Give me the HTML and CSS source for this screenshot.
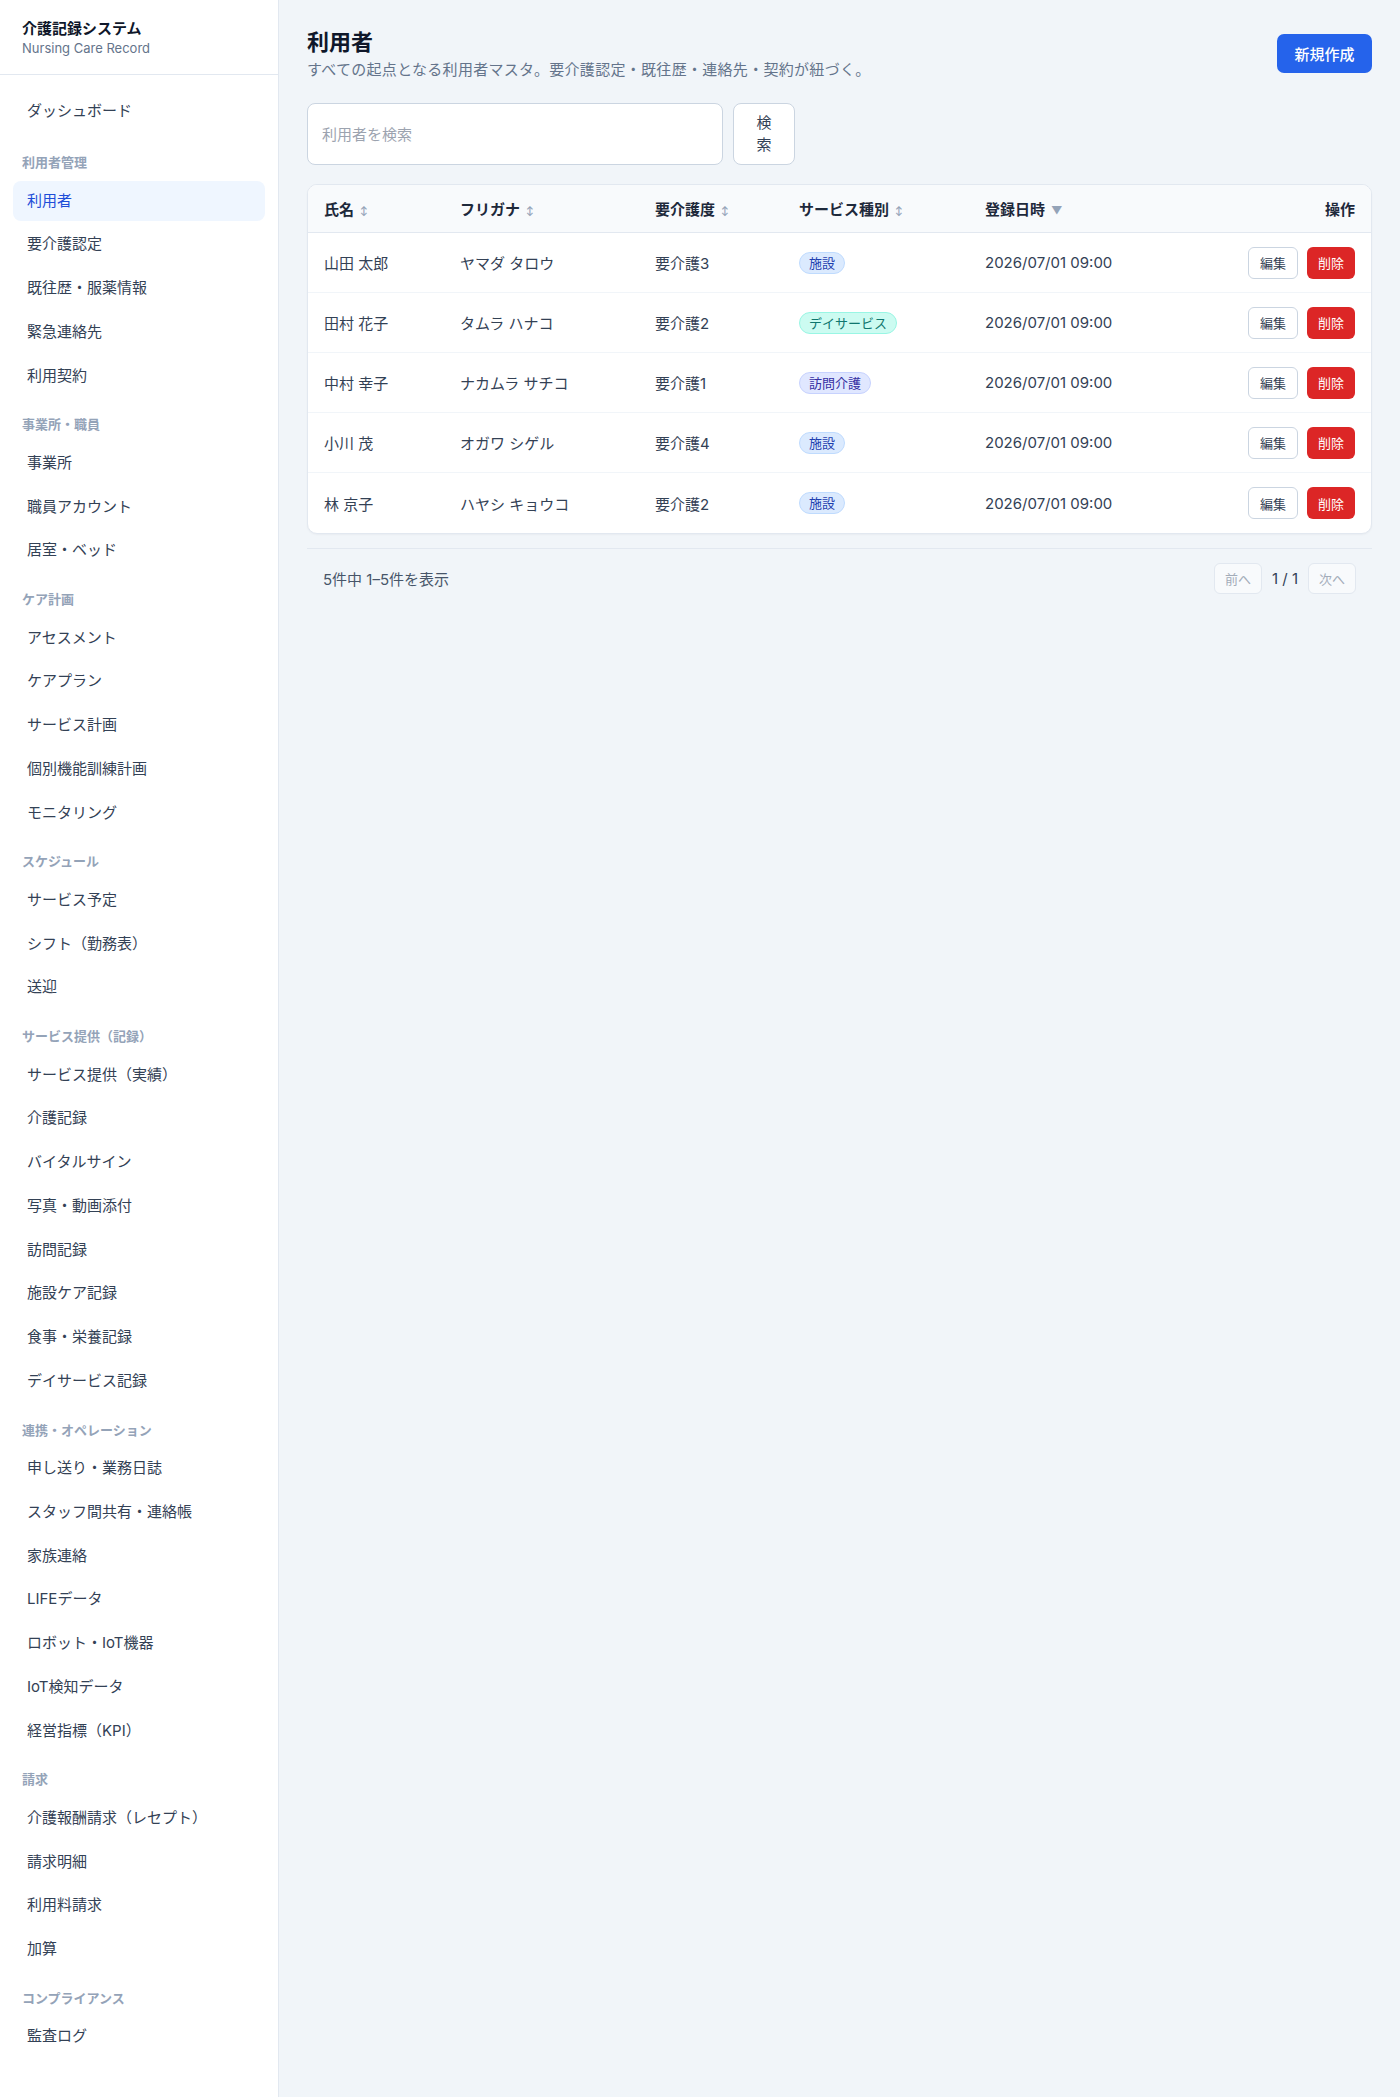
FILE: index.html
```html
<!DOCTYPE html>
<html lang="ja">
<head>
    <meta charset="UTF-8">
    <meta name="viewport" content="width=device-width, initial-scale=1.0">
    <title>利用者 - 介護記録システム</title>
    <link rel="stylesheet" href="styles.css">
</head>
<body>
    <div class="layout">
        <aside class="sidebar">
            <div class="brand">
                <div class="brand-title">介護記録システム</div>
                <div class="brand-sub">Nursing Care Record</div>
            </div>
            <nav class="nav">
                <a href="#" class="nav-item first">ダッシュボード</a>

                <div class="nav-label">利用者管理</div>
                <a href="#" class="nav-item active">利用者</a>
                <a href="#" class="nav-item">要介護認定</a>
                <a href="#" class="nav-item">既往歴・服薬情報</a>
                <a href="#" class="nav-item">緊急連絡先</a>
                <a href="#" class="nav-item">利用契約</a>

                <div class="nav-label">事業所・職員</div>
                <a href="#" class="nav-item">事業所</a>
                <a href="#" class="nav-item">職員アカウント</a>
                <a href="#" class="nav-item">居室・ベッド</a>

                <div class="nav-label">ケア計画</div>
                <a href="#" class="nav-item">アセスメント</a>
                <a href="#" class="nav-item">ケアプラン</a>
                <a href="#" class="nav-item">サービス計画</a>
                <a href="#" class="nav-item">個別機能訓練計画</a>
                <a href="#" class="nav-item">モニタリング</a>

                <div class="nav-label">スケジュール</div>
                <a href="#" class="nav-item">サービス予定</a>
                <a href="#" class="nav-item">シフト（勤務表）</a>
                <a href="#" class="nav-item">送迎</a>

                <div class="nav-label">サービス提供（記録）</div>
                <a href="#" class="nav-item">サービス提供（実績）</a>
                <a href="#" class="nav-item">介護記録</a>
                <a href="#" class="nav-item">バイタルサイン</a>
                <a href="#" class="nav-item">写真・動画添付</a>
                <a href="#" class="nav-item">訪問記録</a>
                <a href="#" class="nav-item">施設ケア記録</a>
                <a href="#" class="nav-item">食事・栄養記録</a>
                <a href="#" class="nav-item">デイサービス記録</a>

                <div class="nav-label">連携・オペレーション</div>
                <a href="#" class="nav-item">申し送り・業務日誌</a>
                <a href="#" class="nav-item">スタッフ間共有・連絡帳</a>
                <a href="#" class="nav-item">家族連絡</a>
                <a href="#" class="nav-item">LIFEデータ</a>
                <a href="#" class="nav-item">ロボット・IoT機器</a>
                <a href="#" class="nav-item">IoT検知データ</a>
                <a href="#" class="nav-item">経営指標（KPI）</a>

                <div class="nav-label">請求</div>
                <a href="#" class="nav-item">介護報酬請求（レセプト）</a>
                <a href="#" class="nav-item">請求明細</a>
                <a href="#" class="nav-item">利用料請求</a>
                <a href="#" class="nav-item">加算</a>

                <div class="nav-label">コンプライアンス</div>
                <a href="#" class="nav-item">監査ログ</a>
            </nav>
        </aside>

        <main class="main">
            <div class="page-head">
                <div>
                    <h1>利用者</h1>
                    <p>すべての起点となる利用者マスタ。要介護認定・既往歴・連絡先・契約が紐づく。</p>
                </div>
                <button class="btn-primary">新規作成</button>
            </div>

            <form class="search">
                <input type="text" placeholder="利用者を検索">
                <button type="submit">検索</button>
            </form>

            <div class="card">
                <table>
                    <colgroup>
                        <col style="width: 136px">
                        <col style="width: 195px">
                        <col style="width: 144px">
                        <col style="width: 186px">
                        <col style="width: 250px">
                        <col>
                    </colgroup>
                    <thead>
                        <tr>
                            <th>氏名<span class="sort">↕</span></th>
                            <th>フリガナ<span class="sort">↕</span></th>
                            <th>要介護度<span class="sort">↕</span></th>
                            <th>サービス種別<span class="sort">↕</span></th>
                            <th>登録日時<span class="sort-active">▼</span></th>
                            <th class="right">操作</th>
                        </tr>
                    </thead>
                    <tbody>
                        <tr>
                            <td>山田 太郎</td>
                            <td>ヤマダ タロウ</td>
                            <td>要介護3</td>
                            <td><span class="badge badge-facility">施設</span></td>
                            <td>2026/07/01 09:00</td>
                            <td><div class="actions"><button class="btn-sm btn-edit">編集</button><button class="btn-sm btn-del">削除</button></div></td>
                        </tr>
                        <tr>
                            <td>田村 花子</td>
                            <td>タムラ ハナコ</td>
                            <td>要介護2</td>
                            <td><span class="badge badge-day">デイサービス</span></td>
                            <td>2026/07/01 09:00</td>
                            <td><div class="actions"><button class="btn-sm btn-edit">編集</button><button class="btn-sm btn-del">削除</button></div></td>
                        </tr>
                        <tr>
                            <td>中村 幸子</td>
                            <td>ナカムラ サチコ</td>
                            <td>要介護1</td>
                            <td><span class="badge badge-visit">訪問介護</span></td>
                            <td>2026/07/01 09:00</td>
                            <td><div class="actions"><button class="btn-sm btn-edit">編集</button><button class="btn-sm btn-del">削除</button></div></td>
                        </tr>
                        <tr>
                            <td>小川 茂</td>
                            <td>オガワ シゲル</td>
                            <td>要介護4</td>
                            <td><span class="badge badge-facility">施設</span></td>
                            <td>2026/07/01 09:00</td>
                            <td><div class="actions"><button class="btn-sm btn-edit">編集</button><button class="btn-sm btn-del">削除</button></div></td>
                        </tr>
                        <tr>
                            <td>林 京子</td>
                            <td>ハヤシ キョウコ</td>
                            <td>要介護2</td>
                            <td><span class="badge badge-facility">施設</span></td>
                            <td>2026/07/01 09:00</td>
                            <td><div class="actions"><button class="btn-sm btn-edit">編集</button><button class="btn-sm btn-del">削除</button></div></td>
                        </tr>
                    </tbody>
                </table>
            </div>

            <div class="pager">
                <span class="pager-info">5件中 1–5件を表示</span>
                <div class="pager-nav">
                    <button class="pager-btn" disabled>前へ</button>
                    <span class="pager-page">1 / 1</span>
                    <button class="pager-btn" disabled>次へ</button>
                </div>
            </div>
        </main>
    </div>
</body>
</html>
```

FILE: styles.css
```css
body {
    margin: 0;
    font-family: Inter, "Noto Sans CJK JP", sans-serif;
    font-size: 15px;
    color: #334155;
    background-color: #f1f5f9;
}

.layout {
    display: flex;
    min-height: 100vh;
}

/* Sidebar */
.sidebar {
    width: 279px;
    flex-shrink: 0;
    box-sizing: border-box;
    background-color: #fff;
    border-right: 1px solid #e2e8f0;
}

.brand {
    padding: 19px 22px 17px;
    border-bottom: 1px solid #e2e8f0;
}

.brand-title {
    font-size: 15px;
    font-weight: 700;
    line-height: 20px;
    color: #0f172a;
}

.brand-sub {
    font-size: 13px;
    line-height: 18px;
    color: #64748b;
}

.nav {
    display: flex;
    flex-direction: column;
    padding: 16px 13px;
}

.nav-item {
    display: block;
    height: 40px;
    line-height: 40px;
    padding: 0 14px;
    margin-bottom: 3.75px;
    border-radius: 8px;
    color: #334155;
    text-decoration: none;
    font-size: 15px;
}

.nav-item.first {
    margin-bottom: 6px;
}

.nav-item.active {
    background-color: #eff6ff;
    color: #1d4ed8;
}

.nav-label {
    margin: 17px 0 10.5px;
    padding: 0 9px;
    font-size: 13px;
    line-height: 16px;
    font-weight: 700;
    color: #94a3b8;
}

/* Main */
.main {
    flex: 1;
    min-width: 0;
    padding: 28px;
}

.page-head {
    display: flex;
    justify-content: space-between;
    align-items: flex-start;
}

.page-head h1 {
    margin: 0;
    font-size: 22px;
    line-height: 28px;
    font-weight: 700;
    color: #0f172a;
}

.page-head p {
    margin: 3px 0 0;
    font-size: 15px;
    line-height: 22px;
    letter-spacing: 0.3px;
    color: #64748b;
}

.btn-primary {
    height: 39px;
    margin-top: 6px;
    padding: 0 17.5px;
    border: none;
    border-radius: 7px;
    background-color: #2563eb;
    color: #fff;
    font-family: inherit;
    font-size: 15px;
    font-weight: 500;
    cursor: pointer;
}

.search {
    display: flex;
    gap: 10px;
    margin-top: 22px;
}

.search input {
    width: 416px;
    box-sizing: border-box;
    padding: 0 14px;
    border: 1px solid #cbd5e1;
    border-radius: 8px;
    background-color: #fff;
    font-family: inherit;
    font-size: 15px;
    color: #334155;
}

.search input::placeholder {
    color: #9ca3af;
}

.search button {
    width: 62px;
    padding: 8px 16px;
    line-height: 22px;
    border: 1px solid #cbd5e1;
    border-radius: 8px;
    background-color: #fff;
    font-family: inherit;
    font-size: 15px;
    color: #334155;
    cursor: pointer;
}

/* Table */
.card {
    margin-top: 19px;
    background-color: #fff;
    border: 1px solid #e2e8f0;
    border-radius: 10px;
    overflow: hidden;
    box-shadow: 0 1px 2px rgba(15, 23, 42, 0.04);
}

table {
    width: 100%;
    border-collapse: separate;
    border-spacing: 0;
    table-layout: fixed;
}

th {
    height: 48px;
    box-sizing: border-box;
    padding: 0 16px;
    text-align: left;
    background-color: #f8fafc;
    border-bottom: 1px solid #e2e8f0;
    font-weight: 700;
    color: #1e293b;
    white-space: nowrap;
}

th.right {
    text-align: right;
}

.sort {
    margin-left: 6px;
    font-size: 9px;
    color: #94a3b8;
    vertical-align: 1px;
}

.sort-active {
    margin-left: 6px;
    font-size: 11px;
    color: #94a3b8;
    vertical-align: 1px;
}

td {
    height: 60px;
    box-sizing: border-box;
    padding: 0 16px;
    border-bottom: 1px solid #f1f5f9;
    white-space: nowrap;
}

tbody tr:last-child td {
    border-bottom: none;
}

.badge {
    display: inline-block;
    height: 22px;
    line-height: 20px;
    box-sizing: border-box;
    padding: 0 9px;
    border-radius: 11px;
    border: 1px solid;
    font-size: 13px;
}

.badge-facility {
    background-color: #dbeafe;
    border-color: #bfdbfe;
    color: #1e40af;
}

.badge-day {
    background-color: #ccfbf1;
    border-color: #99f6e4;
    color: #0f766e;
}

.badge-visit {
    background-color: #e0e7ff;
    border-color: #c7d2fe;
    color: #3730a3;
}

.actions {
    display: flex;
    justify-content: flex-end;
    gap: 9px;
}

.btn-sm {
    height: 32px;
    padding: 0 11px;
    border-radius: 6px;
    font-family: inherit;
    font-size: 13px;
    cursor: pointer;
}

.btn-edit {
    border: 1px solid #cbd5e1;
    background-color: #fff;
    color: #334155;
}

.btn-del {
    border: none;
    background-color: #dc2626;
    color: #fff;
}

/* Pagination */
.pager {
    display: flex;
    justify-content: space-between;
    align-items: center;
    margin-top: 14px;
    padding: 14px 16px 0;
    border-top: 1px solid #e2e8f0;
}

.pager-info {
    color: #475569;
}

.pager-nav {
    display: flex;
    align-items: center;
    gap: 10px;
}

.pager-btn {
    height: 31px;
    padding: 0 10px;
    border: 1px solid #e2e8f0;
    border-radius: 6px;
    background-color: #f8fafc;
    color: #a3acb9;
    font-family: inherit;
    font-size: 13px;
}

.pager-page {
    color: #334155;
}
```
